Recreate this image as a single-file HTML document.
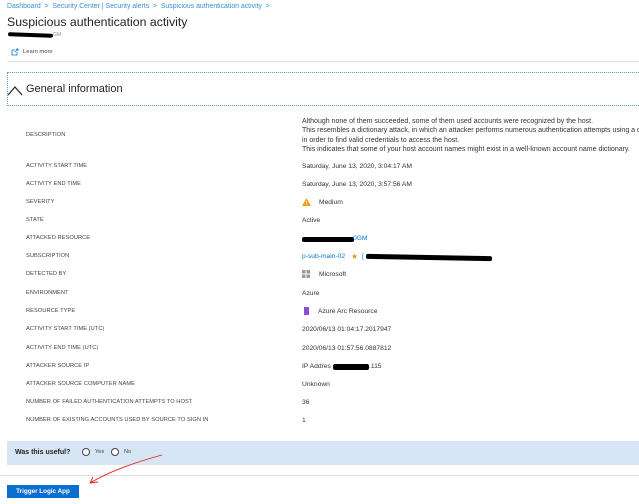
<!DOCTYPE html>
<html><head><meta charset="utf-8"><style>
*{margin:0;padding:0;box-sizing:border-box}
body{width:639px;height:504px;overflow:hidden;background:#fff;font-family:"Liberation Sans",sans-serif;color:#333;position:relative}
.a{position:absolute;white-space:nowrap}
.l{position:absolute;left:26px;font-size:5.7px;color:#444;letter-spacing:0.05px;white-space:nowrap}
.v{position:absolute;left:302px;font-size:6.7px;color:#333;white-space:nowrap}
.blue{color:#0078d4}
.blk{position:absolute;background:#000;border-radius:2px}
</style></head><body>
<div class="a blue" style="left:7px;top:3px;font-size:6.9px;color:#3a8fd6">Dashboard &nbsp;&gt;&nbsp; Security Center | Security alerts &nbsp;&gt;&nbsp; Suspicious authentication activity &nbsp;&gt;</div>
<div class="a" style="left:7px;top:15px;font-size:12.3px;color:#222">Suspicious authentication activity</div>
<div class="blk" style="left:8px;top:33px;width:45px;height:4px;transform:rotate(2deg)"></div>
<div class="a" style="left:53px;top:32px;font-size:5px;color:#888">GM</div>
<svg class="a" style="left:11px;top:48px" width="8" height="8" viewBox="0 0 8 8"><path d="M1 2h3M1 2v5h5V4M4 4l3-3M5 1h2v2" fill="none" stroke="#0078d4" stroke-width="0.8"/></svg>
<div class="a" style="left:23px;top:49px;font-size:5.8px;color:#444">Learn more</div>
<div class="a" style="left:7px;top:61px;width:632px;height:1px;background:#e0e0e0"></div>
<div class="a" style="left:7px;top:72px;width:640px;height:34px;border:1px dotted #5fa0cc"></div>
<svg class="a" style="left:7px;top:84px" width="18" height="12" viewBox="0 0 18 12"><path d="M1 11L8 3l7 8" fill="none" stroke="#222" stroke-width="1.2"/></svg>
<div class="a" style="left:26px;top:83px;font-size:11px;color:#222">General information</div>

<div class="l" style="top:132px">DESCRIPTION</div>
<div class="v" style="top:117px;line-height:9.4px;font-size:7px">Although none of them succeeded, some of them used accounts were recognized by the host.<br>This resembles a dictionary attack, in which an attacker performs numerous authentication attempts using a d<br>in order to find valid credentials to access the host.<br>This indicates that some of your host account names might exist in a well-known account name dictionary.</div>

<div class="l" style="top:163px">ACTIVITY START TIME</div><div class="v" style="top:163px">Saturday, June 13, 2020, 3:04:17 AM</div>
<div class="l" style="top:181px">ACTIVITY END TIME</div><div class="v" style="top:181px">Saturday, June 13, 2020, 3:57:56 AM</div>
<div class="l" style="top:199px">SEVERITY</div>
<svg class="a" style="left:302px;top:198px" width="9" height="8" viewBox="0 0 9 8"><path d="M4.5 0L9 8H0z" fill="#f39c12"/><path d="M4.5 3v2.5M4.5 6.3v.8" stroke="#fff" stroke-width="0.9"/></svg>
<div class="v" style="top:199px;left:319px">Medium</div>
<div class="l" style="top:217px">STATE</div><div class="v" style="top:217px">Active</div>
<div class="l" style="top:235px">ATTACKED RESOURCE</div>
<div class="blk" style="left:302px;top:237px;width:52px;height:5px"></div>
<div class="v blue" style="top:235px;left:353px">0GM</div>
<div class="l" style="top:253px">SUBSCRIPTION</div>
<div class="v blue" style="top:253px">p-sub-main-02</div>
<div class="a" style="left:351px;top:252px;font-size:8px;color:#d4a017">★</div>
<div class="v blue" style="top:253px;left:362px">[</div>
<div class="blk" style="left:366px;top:255px;width:126px;height:5px;transform:rotate(1deg)"></div>
<div class="l" style="top:271px">DETECTED BY</div>
<svg class="a" style="left:302px;top:270px" width="8" height="8"><rect x="0" y="0" width="3.5" height="3.5" fill="#999"/><rect x="4.5" y="0" width="3.5" height="3.5" fill="#999"/><rect x="0" y="4.5" width="3.5" height="3.5" fill="#999"/><rect x="4.5" y="4.5" width="3.5" height="3.5" fill="#999"/></svg>
<div class="v" style="top:271px;left:319px">Microsoft</div>
<div class="l" style="top:290px">ENVIRONMENT</div><div class="v" style="top:290px">Azure</div>
<div class="l" style="top:308px">RESOURCE TYPE</div>
<div class="a" style="left:304px;top:307px;width:5px;height:8px;background:#8a4fd6"></div>
<div class="v" style="top:308px;left:318px">Azure Arc Resource</div>
<div class="l" style="top:326px">ACTIVITY START TIME (UTC)</div><div class="v" style="top:326px">2020/06/13 01:04:17.2017947</div>
<div class="l" style="top:345px">ACTIVITY END TIME (UTC)</div><div class="v" style="top:345px">2020/06/13 01:57:56.0887812</div>
<div class="l" style="top:363px">ATTACKER SOURCE IP</div><div class="v" style="top:363px">IP Addres</div>
<div class="blk" style="left:333px;top:364px;width:36px;height:6px"></div>
<div class="v" style="top:363px;left:369px">.115</div>
<div class="l" style="top:381px">ATTACKER SOURCE COMPUTER NAME</div><div class="v" style="top:381px">Unknown</div>
<div class="l" style="top:399px">NUMBER OF FAILED AUTHENTICATION ATTEMPTS TO HOST</div><div class="v" style="top:399px">36</div>
<div class="l" style="top:417px">NUMBER OF EXISTING ACCOUNTS USED BY SOURCE TO SIGN IN</div><div class="v" style="top:417px">1</div>

<div class="a" style="left:7px;top:441px;width:632px;height:24px;background:#d6e6f4"></div>
<div class="a" style="left:15px;top:449px;font-size:7px;font-weight:bold;color:#222">Was this useful?</div>
<div class="a" style="left:82px;top:448px;width:8px;height:8px;border:1px solid #444;border-radius:50%;background:#fff"></div>
<div class="a" style="left:95px;top:449px;font-size:5.6px;color:#444">Yes</div>
<div class="a" style="left:111px;top:448px;width:8px;height:8px;border:1px solid #444;border-radius:50%;background:#fff"></div>
<div class="a" style="left:124px;top:449px;font-size:5.6px;color:#444">No</div>
<div class="a" style="left:0;top:475px;width:639px;height:1px;background:#ddd"></div>
<svg class="a" style="left:85px;top:453px" width="80" height="35" viewBox="0 0 80 35"><path d="M77 2C55 8 25 18 5 30M5 30l8-1M5 30l3-6" fill="none" stroke="#e82020" stroke-width="0.9"/></svg>
<div class="a" style="left:7px;top:485px;width:72px;height:13px;background:#0b6fcf;color:#fff;font-size:6.3px;font-weight:bold;text-align:center;line-height:13px">Trigger Logic App</div>
</body></html>
